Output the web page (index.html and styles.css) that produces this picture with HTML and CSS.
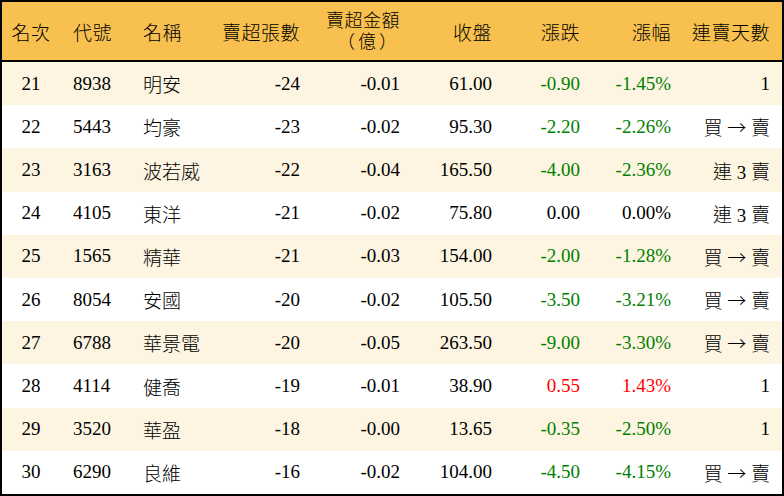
FILE: index.html
```html
<!DOCTYPE html>
<html lang="zh-Hant">
<head>
<meta charset="utf-8">
<link rel="stylesheet" href="styles.css">
</head>
<body>
<div class="board">
  <div class="row head">
    <div class="c c1">名次</div>
    <div class="c c2">代號</div>
    <div class="c c3">名稱</div>
    <div class="c r">賣超張數</div>
    <div class="c r two"><div>賣超金額</div><div class="unit">（億）</div></div>
    <div class="c r">收盤</div>
    <div class="c r">漲跌</div>
    <div class="c r">漲幅</div>
    <div class="c r last">連賣天數</div>
  </div>
  <div class="row odd"><div class="c c1">21</div><div class="c c2">8938</div><div class="c c3">明安</div><div class="c r">-24</div><div class="c r">-0.01</div><div class="c r">61.00</div><div class="c r dn">-0.90</div><div class="c r dn">-1.45%</div><div class="c r last">1</div></div>
  <div class="row"><div class="c c1">22</div><div class="c c2">5443</div><div class="c c3">均豪</div><div class="c r">-23</div><div class="c r">-0.02</div><div class="c r">95.30</div><div class="c r dn">-2.20</div><div class="c r dn">-2.26%</div><div class="c r last">買 <span class="arrow">→</span> 賣</div></div>
  <div class="row odd"><div class="c c1">23</div><div class="c c2">3163</div><div class="c c3">波若威</div><div class="c r">-22</div><div class="c r">-0.04</div><div class="c r">165.50</div><div class="c r dn">-4.00</div><div class="c r dn">-2.36%</div><div class="c r last">連 3 賣</div></div>
  <div class="row"><div class="c c1">24</div><div class="c c2">4105</div><div class="c c3">東洋</div><div class="c r">-21</div><div class="c r">-0.02</div><div class="c r">75.80</div><div class="c r">0.00</div><div class="c r">0.00%</div><div class="c r last">連 3 賣</div></div>
  <div class="row odd"><div class="c c1">25</div><div class="c c2">1565</div><div class="c c3">精華</div><div class="c r">-21</div><div class="c r">-0.03</div><div class="c r">154.00</div><div class="c r dn">-2.00</div><div class="c r dn">-1.28%</div><div class="c r last">買 <span class="arrow">→</span> 賣</div></div>
  <div class="row"><div class="c c1">26</div><div class="c c2">8054</div><div class="c c3">安國</div><div class="c r">-20</div><div class="c r">-0.02</div><div class="c r">105.50</div><div class="c r dn">-3.50</div><div class="c r dn">-3.21%</div><div class="c r last">買 <span class="arrow">→</span> 賣</div></div>
  <div class="row odd"><div class="c c1">27</div><div class="c c2">6788</div><div class="c c3">華景電</div><div class="c r">-20</div><div class="c r">-0.05</div><div class="c r">263.50</div><div class="c r dn">-9.00</div><div class="c r dn">-3.30%</div><div class="c r last">買 <span class="arrow">→</span> 賣</div></div>
  <div class="row"><div class="c c1">28</div><div class="c c2">4114</div><div class="c c3">健喬</div><div class="c r">-19</div><div class="c r">-0.01</div><div class="c r">38.90</div><div class="c r up">0.55</div><div class="c r up">1.43%</div><div class="c r last">1</div></div>
  <div class="row odd"><div class="c c1">29</div><div class="c c2">3520</div><div class="c c3">華盈</div><div class="c r">-18</div><div class="c r">-0.00</div><div class="c r">13.65</div><div class="c r dn">-0.35</div><div class="c r dn">-2.50%</div><div class="c r last">1</div></div>
  <div class="row"><div class="c c1">30</div><div class="c c2">6290</div><div class="c c3">良維</div><div class="c r">-16</div><div class="c r">-0.02</div><div class="c r">104.00</div><div class="c r dn">-4.50</div><div class="c r dn">-4.15%</div><div class="c r last">買 <span class="arrow">→</span> 賣</div></div>
</div>
</body>
</html>
```
FILE: styles.css
```css
html, body {
  margin: 0;
  padding: 0;
  background: #ffffff;
}
.board {
  width: 784px;
  height: 496px;
  box-sizing: border-box;
  border: 2px solid #000;
  display: flex;
  flex-direction: column;
  font-family: "Liberation Serif", "Noto Sans CJK TC", serif;
  font-size: 19px;
  font-weight: 300;
  color: #000;
}
.row {
  display: grid;
  grid-template-columns: 58px 70px 70px 110px 100px 92px 88px 91px 101px;
  flex: 1 1 0;
  align-items: center;
  background: #ffffff;
}
.row.odd {
  background: #fdf5e2;
}
.row.head {
  flex: 0 0 60px;
  box-sizing: border-box;
  border-bottom: 2px solid #000;
  background: #f8c04f;
  letter-spacing: 0.5px;
}
.c {
  white-space: nowrap;
}
.c1 {
  text-align: center;
}
.c2 {
  padding-left: 13px;
}
.c3 {
  padding-left: 13px;
}
.r {
  text-align: right;
  padding-right: 10px;
}
.r.last {
  padding-right: 12px;
}
.two {
  display: flex;
  flex-direction: column;
  align-items: flex-end;
  font-size: 18px;
  line-height: 21px;
  padding-top: 1px;
}
.unit {
  letter-spacing: 3px;
}
.arrow {
  font-family: "Noto Sans CJK TC", sans-serif;
}
.dn {
  color: #008000;
}
.up {
  color: #ff0000;
}
```
